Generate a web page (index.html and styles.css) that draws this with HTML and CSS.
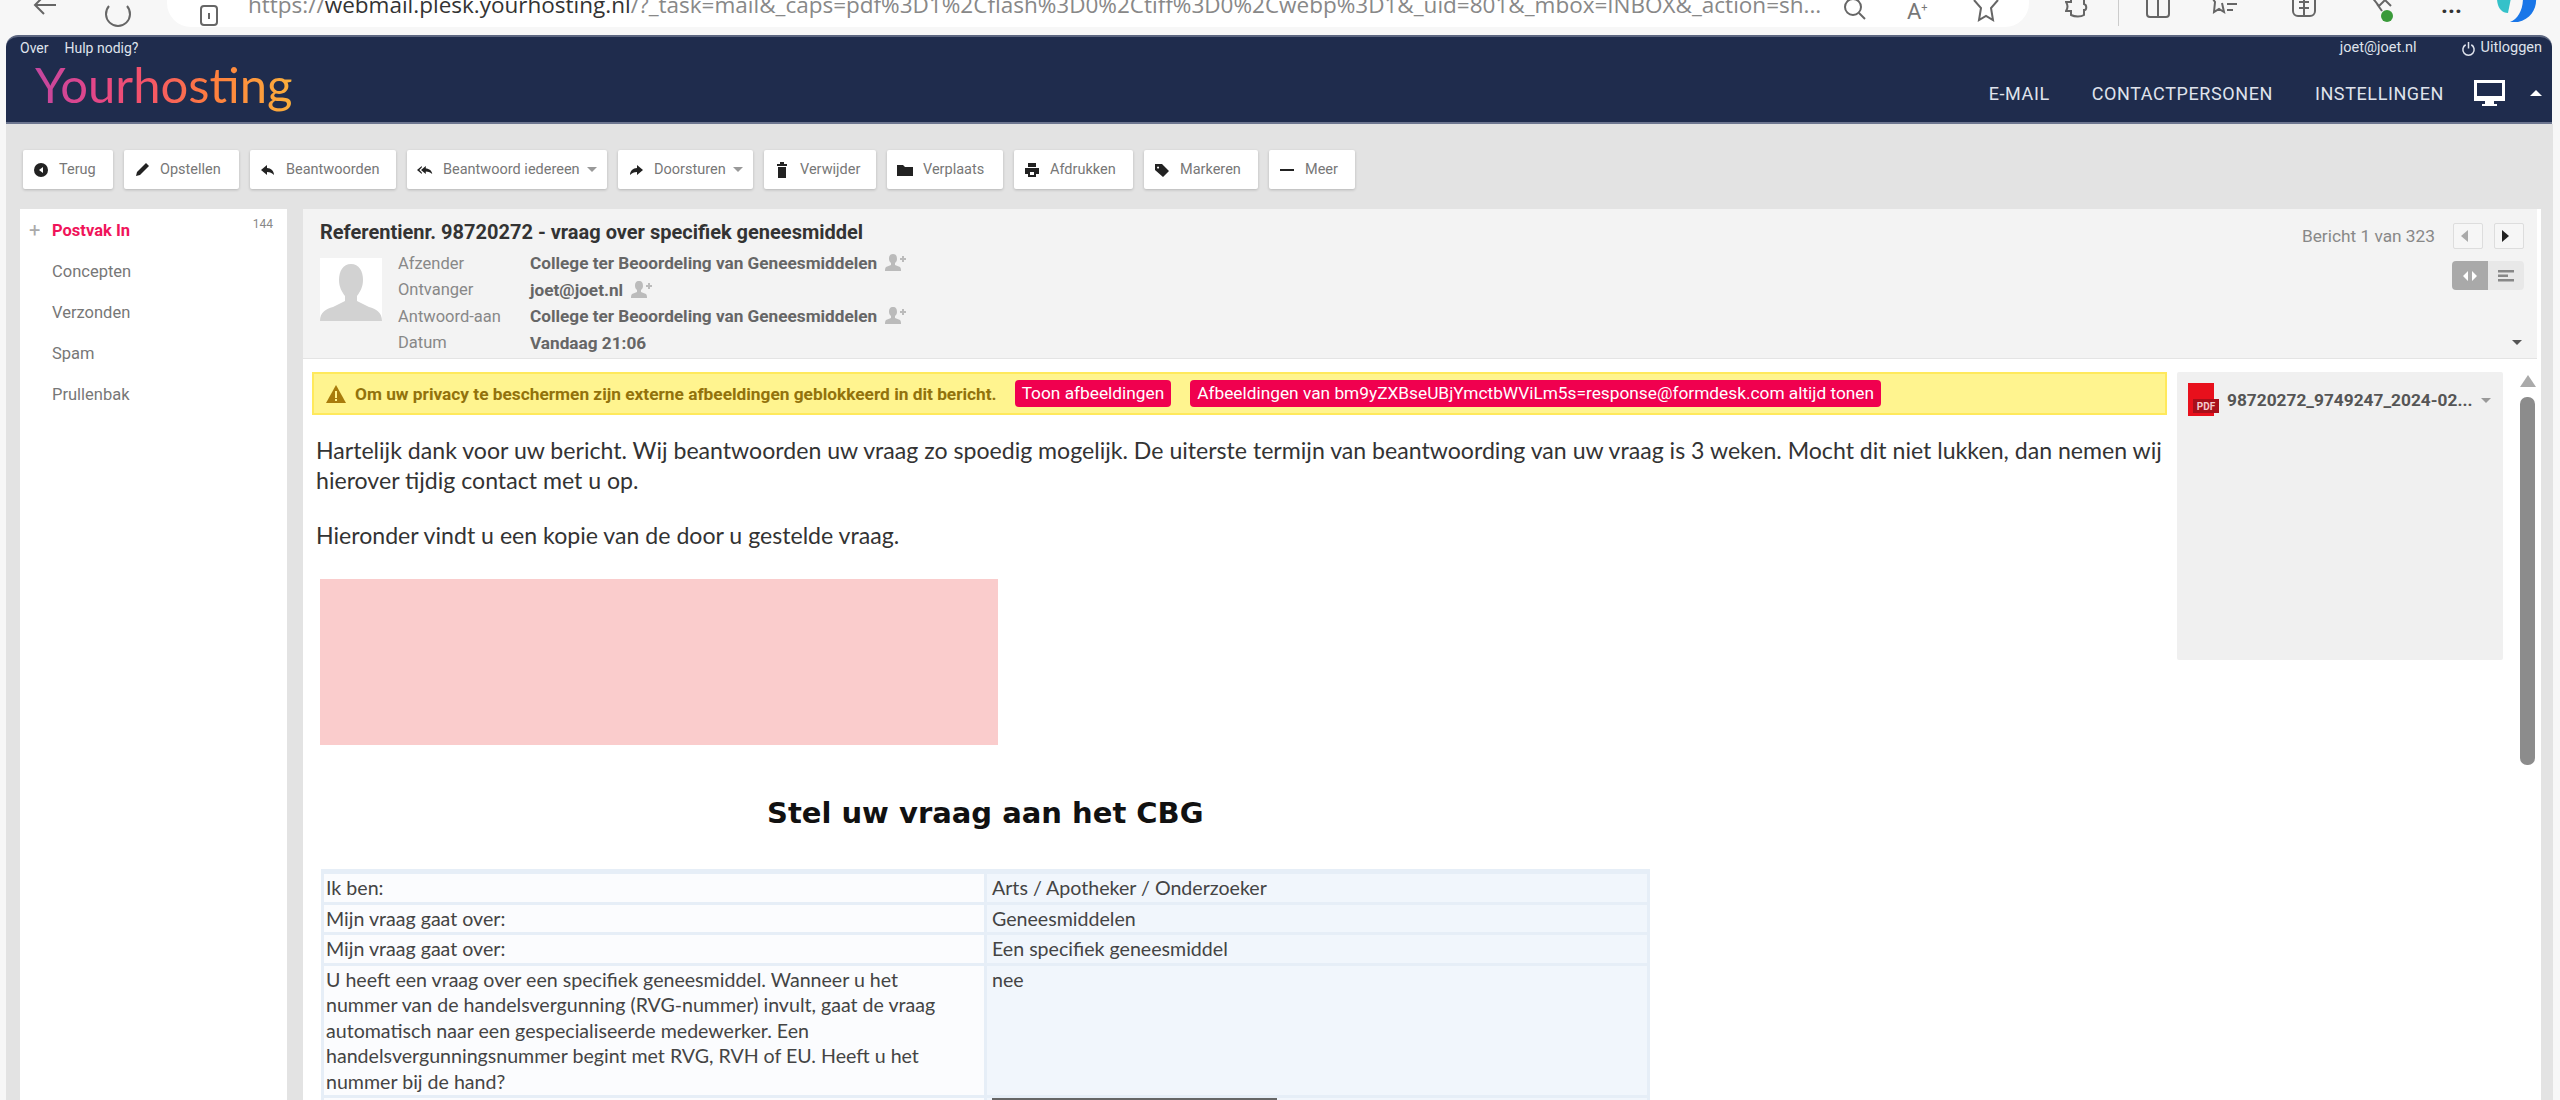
FILE: index.html
```html
<!DOCTYPE html>
<html lang="nl">
<head>
  <meta charset="UTF-8">
  <title>Yourhosting Webmail</title>
  <link rel="stylesheet" href="styles.css">
</head>
<body>
  <!-- browser chrome, top is cut off in the screenshot -->
  <div class="browser">
    <svg class="b-icon back" viewBox="0 0 30 30"><path d="M26 15H6M14 6l-9 9 9 9"/></svg>
    <svg class="b-icon reload" viewBox="0 0 30 30"><path d="M24 9a12 12 0 1 1-18 0"/></svg>
    <div class="addressbar">
      <svg class="b-icon lock" viewBox="0 0 24 24"><rect x="4" y="3" width="16" height="19" rx="3"/><path d="M12 10v6"/></svg>
      <span class="url">https://<b>webmail.plesk.yourhosting.nl</b>/?_task=mail&amp;_caps=pdf%3D1%2Cflash%3D0%2Ctiff%3D0%2Cwebp%3D1&amp;_uid=801&amp;_mbox=INBOX&amp;_action=sh...</span>
      <svg class="b-icon search" viewBox="0 0 24 24"><circle cx="10" cy="8" r="8"/><path d="M16 14l6 6"/></svg>
      <span class="read">A<sup>+</sup></span>
      <svg class="b-icon star" viewBox="0 0 28 24"><path d="M2 0l7 8-2 12 7-4 7 4-2-12 7-8"/></svg>
    </div>
    <div class="browser-tools">
      <svg class="b-icon puzzle" viewBox="0 0 26 26"><path d="M6 0v6H1c2 3 2 6 0 9h5v4c4 2 10 2 13 0v-5c3 0 3-5 0-6V0"/></svg>
      <span class="tool-sep"></span>
      <svg class="b-icon split" viewBox="0 0 26 26"><path d="M2 0v18c0 2 1 3 3 3h16c2 0 3-1 3-3V0M13 0v21"/></svg>
      <svg class="b-icon favs" viewBox="0 0 30 26"><path d="M2 0l4 6-1 10 5-3 5 3-2-9M18 2h10M18 8h10M18 14h6"/></svg>
      <svg class="b-icon coll" viewBox="0 0 26 26"><rect x="2" y="-6" width="22" height="26" rx="5"/><path d="M8 6h10M8 12h10M13 0v20"/></svg>
      <svg class="b-icon ext" viewBox="0 0 26 30"><path d="M2 0l8 10 6-6 6 6M8 8l5 7"/><circle cx="18" cy="20" r="6" fill="#3a9a3a" stroke="none"/></svg>
      <span class="dots">...</span>
      <svg class="copilot" viewBox="0 0 42 24"><path d="M2 0h14l-3 15c-6 0-11-5-11-15z" fill="#35c1c9"/><path d="M28 0h13c1 10-5 21-18 24h-8c8-3 13-12 13-24z" fill="#1976e8"/></svg>
    </div>
  </div>

  <header class="topbar">
    <div class="brand">
      <div class="toplinks">
        <a>Over</a>
        <a>Hulp nodig?</a>
      </div>
      <div class="logo">Yourhosting</div>
    </div>
    <div class="topright">
      <div class="userline">
        <span>joet@joet.nl</span>
        <span class="logout">
          <svg viewBox="0 0 16 16"><path d="M5 4a6 6 0 1 0 6 0M8 1v7"/></svg>
          Uitloggen
        </span>
      </div>
      <nav class="mainnav">
        <a>E-MAIL</a>
        <a>CONTACTPERSONEN</a>
        <a>INSTELLINGEN</a>
        <svg class="monitor" viewBox="0 0 31 26"><path d="M0 0h31v21H20v3h3v2H8v-2h3v-3H0zM3 3v13h25V3z" fill-rule="evenodd"/></svg>
        <span class="caret-up"></span>
      </nav>
    </div>
  </header>

  <div class="page">
    <div class="toolbar">
      <button><svg viewBox="0 0 16 16"><circle cx="8" cy="8" r="7"/><path d="M10 5L6 8l4 3z" fill="#fff"/></svg>Terug</button>
      <button><svg viewBox="0 0 16 16"><path d="M12 1l3 3-9 9-4 1 1-4z"/></svg>Opstellen</button>
      <button><svg viewBox="0 0 16 16"><path d="M7 3L1 8l6 5v-3c3 0 5 1 7 3 0-4-3-7-7-7z"/></svg>Beantwoorden</button>
      <button class="has-menu"><svg viewBox="0 0 20 16"><path d="M6 3L0 8l6 5v-2L3 8l3-3zM11 3L5 8l6 5v-3c3 0 5 1 8 3 0-4-4-7-8-7z"/></svg>Beantwoord iedereen<span class="caret"></span></button>
      <button class="has-menu"><svg viewBox="0 0 16 16"><path d="M9 3l6 5-6 5v-3c-3 0-5 1-7 3 0-4 3-7 7-7z"/></svg>Doorsturen<span class="caret"></span></button>
      <button><svg viewBox="0 0 16 16"><path d="M6 0h4v2h3v2H3V2h3zM4 5h8v11H4z"/></svg>Verwijder</button>
      <button><svg viewBox="0 0 16 16"><path d="M0 3h6l2 2h8v9H0z"/></svg>Verplaats</button>
      <button><svg viewBox="0 0 16 16"><path d="M4 1h8v4H4zM1 6h14v6h-3v3H4v-3H1zM6 10v3h4v-3z" fill-rule="evenodd"/></svg>Afdrukken</button>
      <button><svg viewBox="0 0 16 16"><path d="M1 2h7l7 7-6 6-8-7zM4 4.500a1 1 0 1 0 .1 0z"/></svg>Markeren</button>
      <button><svg viewBox="0 0 16 16"><path d="M1 7h14v2H1z"/></svg>Meer</button>
    </div>

    <div class="content">
      <aside class="folders">
        <span class="unread">144</span>
        <ul>
          <li class="active"><span class="plus">+</span>Postvak In</li>
          <li>Concepten</li>
          <li>Verzonden</li>
          <li>Spam</li>
          <li>Prullenbak</li>
        </ul>
      </aside>

      <main class="mail">
        <section class="mailhead">
          <div class="headleft">
            <h2>Referentienr. 98720272 - vraag over specifiek geneesmiddel</h2>
            <div class="headinfo">
              <svg class="avatar" viewBox="0 0 62 63">
                <rect width="62" height="63" fill="#fff"/>
                <path d="M31 6c8 0 12 7 12 16 0 7-3 12-6 16v5l12 6c7 2 13 5 13 14H0c0-9 6-12 13-14l12-6v-5c-3-4-6-9-6-16 0-9 4-16 12-16z" fill="#d2d2d2"/>
              </svg>
              <dl class="fields">
                <dt>Afzender</dt>
                <dd>College ter Beoordeling van Geneesmiddelen <svg class="addperson" viewBox="0 0 22 18"><path d="M8 0c3 0 4 2 4 5 0 2-1 3-2 4v2l5 2c1 1 1 3 1 4H0c0-1 0-3 1-4l5-2V9C5 8 4 7 4 5c0-3 1-5 4-5zM17 2h2v2h2v2h-2v2h-2V6h-2V4h2z"/></svg></dd>
                <dt>Ontvanger</dt>
                <dd>joet@joet.nl <svg class="addperson" viewBox="0 0 22 18"><path d="M8 0c3 0 4 2 4 5 0 2-1 3-2 4v2l5 2c1 1 1 3 1 4H0c0-1 0-3 1-4l5-2V9C5 8 4 7 4 5c0-3 1-5 4-5zM17 2h2v2h2v2h-2v2h-2V6h-2V4h2z"/></svg></dd>
                <dt>Antwoord-aan</dt>
                <dd>College ter Beoordeling van Geneesmiddelen <svg class="addperson" viewBox="0 0 22 18"><path d="M8 0c3 0 4 2 4 5 0 2-1 3-2 4v2l5 2c1 1 1 3 1 4H0c0-1 0-3 1-4l5-2V9C5 8 4 7 4 5c0-3 1-5 4-5zM17 2h2v2h2v2h-2v2h-2V6h-2V4h2z"/></svg></dd>
                <dt>Datum</dt>
                <dd>Vandaag 21:06</dd>
              </dl>
            </div>
          </div>
          <div class="headright">
            <div class="pager">
              <span>Bericht 1 van 323</span>
              <button class="pagebtn"><span class="tri-left"></span></button>
              <button class="pagebtn"><span class="tri-right"></span></button>
            </div>
            <div class="viewswitch">
              <span class="on"><svg viewBox="0 0 16 12"><path d="M6 1L1 6l5 5zM10 1l5 5-5 5z"/></svg></span>
              <span><svg viewBox="0 0 16 12"><path d="M0 0h16v2.500H0zM0 4.500h10V7H0zM0 9h16v2.500H0z"/></svg></span>
            </div>
            <span class="caret expand"></span>
          </div>
        </section>

        <section class="mailbody">
          <div class="message">
            <div class="notice">
              <svg class="warn" viewBox="0 0 20 18"><path d="M10 0l10 18H0z" fill="#a87b0c"/><path d="M9 6h2v7H9zM9 14h2v2H9z" fill="#fff48f"/></svg>
              <span class="notice-text">Om uw privacy te beschermen zijn externe afbeeldingen geblokkeerd in dit bericht.</span>
              <a class="pill">Toon afbeeldingen</a>
              <a class="pill">Afbeeldingen van bm9yZXBseUBjYmctbWViLm5s=response@formdesk.com altijd tonen</a>
            </div>
            <p>Hartelijk dank voor uw bericht. Wij beantwoorden uw vraag zo spoedig mogelijk. De uiterste termijn van beantwoording van uw vraag is 3 weken. Mocht dit niet lukken, dan nemen wij hierover tijdig contact met u op.</p>
            <p>Hieronder vindt u een kopie van de door u gestelde vraag.</p>
            <div class="blocked"></div>
            <h1>Stel uw vraag aan het CBG</h1>
            <table>
              <tr><td>Ik ben:</td><td>Arts / Apotheker / Onderzoeker</td></tr>
              <tr><td>Mijn vraag gaat over:</td><td>Geneesmiddelen</td></tr>
              <tr><td>Mijn vraag gaat over:</td><td>Een specifiek geneesmiddel</td></tr>
              <tr><td>U heeft een vraag over een specifiek geneesmiddel. Wanneer u het<br>nummer van de handelsvergunning (RVG-nummer) invult, gaat de vraag<br>automatisch naar een gespecialiseerde medewerker. Een<br>handelsvergunningsnummer begint met RVG, RVH of EU. Heeft u het<br>nummer bij de hand?</td><td>nee</td></tr>
              <tr><td>&nbsp;</td><td><div class="hidden-value"></div></td></tr>
            </table>
          </div>

          <div class="attachments">
            <svg class="pdf" viewBox="0 0 31 33">
              <rect width="26" height="33" fill="#e8101c"/>
              <rect x="5" y="16" width="26" height="14" fill="#a80f1a"/>
              <text x="18" y="27" class="pdf-label">PDF</text>
            </svg>
            <span class="filename">98720272_9749247_2024-02...</span>
            <span class="caret"></span>
          </div>

          <div class="scrollbar">
            <span class="tri-up"></span>
            <div class="thumb"></div>
          </div>
        </section>
      </main>
    </div>
  </div>
</body>
</html>
```

FILE: styles.css
```css
html, body {
  margin: 0;
  height: 1100px;
  overflow: hidden;
}
body {
  font-family: Roboto, sans-serif;
  background-color: #f7f7f7;
  color: #555;
}

/* browser chrome */
.browser {
  height: 35px;
  display: flex;
  align-items: flex-start;
  overflow: hidden;
}
.b-icon {
  fill: none;
  stroke: #666;
  stroke-width: 2;
  flex: none;
}
.back {
  width: 30px;
  height: 30px;
  margin: -10px 0 0 30px;
}
.reload {
  width: 30px;
  height: 30px;
  margin: -3px 0 0 43px;
}
.addressbar {
  width: 1862px;
  height: 27px;
  margin-left: 34px;
  background-color: white;
  border-radius: 0 0 24px 24px;
  display: flex;
  align-items: flex-end;
  padding-left: 30px;
  box-sizing: border-box;
}
.lock {
  width: 24px;
  height: 24px;
  margin-right: 27px;
}
.url {
  font-family: "Open Sans", sans-serif;
  font-size: 22.500px;
  line-height: 24px;
  height: 36px;
  margin-bottom: -2px;
  color: #888;
  white-space: nowrap;
  width: 1572px;
  flex: none;
}
.url b {
  font-weight: 400;
  color: #333;
}
.search {
  width: 24px;
  height: 24px;
  margin: 0 0 4px 23px;
}
.read {
  font-size: 22px;
  color: #777;
  margin: 0 0 3px 40px;
  line-height: 24px;
}
.read sup {
  font-size: 11px;
}
.star {
  width: 28px;
  height: 24px;
  margin: 0 0 3px 44px;
}
.browser-tools {
  display: flex;
  align-items: flex-start;
  flex: 1;
}
.browser-tools svg {
  margin-top: -4px;
}
.puzzle {
  width: 26px;
  height: 26px;
  margin-left: 36px;
}
.tool-sep {
  width: 1px;
  height: 26px;
  background-color: #ccc;
  margin-left: 27px;
}
.split {
  width: 26px;
  height: 26px;
  margin-left: 26px;
}
.favs {
  width: 30px;
  height: 26px;
  margin-left: 38px;
}
.coll {
  width: 26px;
  height: 26px;
  margin-left: 52px;
}
.ext {
  width: 26px;
  height: 30px;
  margin-left: 52px;
}
.dots {
  font-size: 24px;
  line-height: 10px;
  margin-left: 46px;
  color: #333;
  font-weight: 700;
}
.browser-tools .copilot {
  width: 42px;
  height: 24px;
  margin: -2px 0 0 33px;
}

/* navy header */
.topbar {
  height: 89px;
  margin: 0 8px 0 6px;
  background-color: #1f2c4d;
  border-radius: 12px 12px 0 0;
  border-top: 2px solid #5d6781;
  border-bottom: 2px solid #6d7690;
  box-sizing: border-box;
  display: flex;
  justify-content: space-between;
  color: #dfe3ec;
}
.toplinks {
  display: flex;
  gap: 16px;
  padding: 4px 0 0 14px;
  font-size: 14px;
  line-height: 14px;
}
.logo {
  font-family: Lato, sans-serif;
  font-size: 49px;
  line-height: 56px;
  margin: 1px 0 0 29px;
  width: max-content;
  background: linear-gradient(90deg, #c2479f 0%, #e2468a 22%, #f4526a 42%, #ff7d3e 68%, #fbb03b 100%);
  -webkit-background-clip: text;
  background-clip: text;
  color: transparent;
}
.topright {
  display: flex;
  flex-direction: column;
  align-items: flex-end;
  padding-right: 10px;
}
.userline {
  display: flex;
  gap: 44px;
  padding-top: 3px;
  font-size: 14.500px;
  line-height: 16px;
}
.logout {
  display: flex;
  align-items: center;
  gap: 5px;
}
.logout svg {
  width: 15px;
  height: 15px;
  fill: none;
  stroke: #dfe3ec;
  stroke-width: 1.6;
}
.mainnav {
  display: flex;
  align-items: center;
  margin-top: 24px;
  font-size: 18px;
  letter-spacing: 0.6px;
}
.mainnav a {
  margin-right: 42px;
}
.mainnav a:nth-child(3) {
  margin-right: 30px;
}
.monitor {
  width: 31px;
  height: 26px;
  fill: white;
}
.caret-up {
  width: 0;
  height: 0;
  margin-left: 25px;
  border-left: 6px solid transparent;
  border-right: 6px solid transparent;
  border-bottom: 6px solid white;
}

/* page */
.page {
  height: 976px;
  margin: 0 7px 0 6px;
  background-color: #e3e3e3;
  padding: 26px 0 0 0;
  box-sizing: border-box;
}
.toolbar {
  display: grid;
  grid-template-columns: 90px 115px 146px 200px 135px 112px 116px 119px 114px 86px;
  column-gap: 11px;
  margin-left: 17px;
}
.toolbar button {
  height: 39px;
  background-color: white;
  border: none;
  border-radius: 2px;
  box-shadow: 0 1px 3px rgba(0, 0, 0, 0.2);
  display: flex;
  align-items: center;
  padding: 0 0 0 10px;
  font-family: Roboto, sans-serif;
  font-size: 14.500px;
  color: #777;
  white-space: nowrap;
}
.toolbar svg {
  width: 16px;
  height: 16px;
  margin-right: 10px;
  fill: #222;
  flex: none;
}
.caret {
  display: inline-block;
  width: 0;
  height: 0;
  margin-left: 7px;
  border-left: 5px solid transparent;
  border-right: 5px solid transparent;
  border-top: 5px solid #999;
}

.content {
  display: flex;
  margin-top: 20px;
  padding-left: 14px;
  height: 900px;
}

/* folder list */
.folders {
  width: 267px;
  background-color: white;
  position: relative;
  font-size: 16.500px;
  color: #777;
}
.folders ul {
  list-style: none;
  margin: 0;
  padding: 0;
}
.folders li {
  height: 41px;
  line-height: 41px;
  padding-left: 32px;
  position: relative;
  top: 1px;
}
.folders li.active {
  color: #f0145a;
  font-weight: 700;
}
.plus {
  position: absolute;
  left: 9px;
  font-size: 20px;
  font-weight: 400;
  color: #aaa;
}
.unread {
  position: absolute;
  right: 14px;
  top: 8px;
  font-size: 12px;
  color: #888;
}

/* mail panel */
.mail {
  width: 2238px;
  margin-left: 16px;
  background-color: white;
  display: flex;
  flex-direction: column;
}
.mailhead {
  height: 150px;
  background-color: #f3f3f3;
  border-bottom: 1px solid #e4e4e4;
  box-sizing: border-box;
  margin-right: 4px;
  display: flex;
  justify-content: space-between;
  padding: 0 13px 0 17px;
}
.mailhead h2 {
  margin: 13px 0 0 0;
  font-size: 20px;
  line-height: 20px;
  font-weight: 700;
  color: #333;
}
.headinfo {
  display: flex;
  margin-top: 15px;
}
.avatar {
  width: 62px;
  height: 63px;
  margin-top: 1px;
}
.fields {
  margin: -7px 0 0 16px;
  display: grid;
  grid-template-columns: 132px auto;
  grid-auto-rows: 26.500px;
  align-items: center;
  font-size: 16.500px;
}
.fields dt {
  color: #888;
}
.fields dd {
  margin: 0;
  font-size: 17.200px;
  font-weight: 700;
  color: #666;
  display: flex;
  align-items: center;
  gap: 8px;
}
.addperson {
  width: 22px;
  height: 18px;
  fill: #bbb;
}
.headright {
  display: flex;
  flex-direction: column;
  align-items: flex-end;
  padding-top: 14px;
}
.pager {
  display: flex;
  align-items: center;
  font-size: 17.300px;
  color: #888;
}
.pagebtn {
  width: 30px;
  height: 26px;
  margin-left: 11px;
  padding: 0;
  background-color: #f6f6f6;
  border: 1px solid #ddd;
  border-radius: 2px;
  display: flex;
  align-items: center;
  justify-content: center;
}
.pager span:first-child {
  margin-right: 7px;
}
.tri-left {
  border-top: 6px solid transparent;
  border-bottom: 6px solid transparent;
  border-right: 7px solid #aaa;
}
.tri-right {
  border-top: 6px solid transparent;
  border-bottom: 6px solid transparent;
  border-left: 7px solid #222;
}
.viewswitch {
  display: flex;
  margin-top: 12px;
  border-radius: 4px;
  overflow: hidden;
}
.viewswitch span {
  width: 36px;
  height: 29px;
  background-color: #e8e8e8;
  display: flex;
  align-items: center;
  justify-content: center;
}
.viewswitch .on {
  background-color: #a9a9a9;
}
.viewswitch svg {
  width: 16px;
  height: 12px;
  fill: #888;
}
.viewswitch .on svg {
  fill: white;
}
.expand {
  margin: 50px 2px 0 0;
  border-top-color: #555;
}

.mailbody {
  flex: 1;
  display: flex;
  min-height: 0;
  padding: 13px 6px 0 9px;
}
.message {
  width: 1855px;
  flex: none;
}
.notice {
  height: 43px;
  background-color: #fff48f;
  border: 2px solid #ffe95c;
  box-sizing: border-box;
  display: flex;
  align-items: center;
  padding-left: 12px;
}
.warn {
  width: 20px;
  height: 18px;
  margin-right: 9px;
}
.notice-text {
  font-size: 17.300px;
  font-weight: 700;
  color: #92720c;
  margin-right: 18px;
  white-space: nowrap;
}
.pill {
  background-color: #f0004f;
  color: white;
  font-size: 17.300px;
  line-height: 27px;
  padding: 0 7px;
  border-radius: 4px;
  margin-right: 19px;
  white-space: nowrap;
}
.message p {
  margin: 20px 0 0 4px;
  font-family: Lato, sans-serif;
  font-size: 23.120px;
  line-height: 30px;
  color: #333;
}
.message p + p {
  margin-top: 25px;
}
.blocked {
  width: 678px;
  height: 166px;
  margin: 29px 0 0 8px;
  background-color: #facccc;
}
h1 {
  margin: 49px 0 0 0;
  padding-left: 455px;
  font-family: "DejaVu Sans", sans-serif;
  font-size: 29px;
  line-height: 38px;
  font-weight: 700;
  color: #111;
}
table {
  width: 1329px;
  margin: 37px 0 0 9px;
  border-collapse: collapse;
  table-layout: fixed;
  font-family: Lato, sans-serif;
  font-size: 19.600px;
  line-height: 25.500px;
  color: #444;
}
td {
  border: 3px solid #e6eef7;
  padding: 1px 2px;
  vertical-align: top;
  background-color: #fbfcfe;
  white-space: nowrap;
}
td + td {
  background-color: #f1f6fc;
  padding-left: 5px;
}
tr:first-child td {
  border-top-width: 5px;
}
.hidden-value {
  width: 285px;
  height: 20px;
  margin-top: -1px;
  background-color: #666;
}

/* attachment list */
.attachments {
  width: 326px;
  height: 288px;
  margin-left: 10px;
  flex: none;
  background-color: #f0f0f0;
  border-radius: 2px;
  box-sizing: border-box;
  padding: 11px 0 0 11px;
  display: flex;
  align-items: flex-start;
}
.pdf {
  width: 31px;
  height: 33px;
  flex: none;
}
.pdf-label {
  font-family: Roboto, sans-serif;
  font-size: 10px;
  font-weight: 700;
  fill: #f4c9cc;
  text-anchor: middle;
}
.filename {
  font-size: 17.300px;
  font-weight: 700;
  color: #555;
  line-height: 34px;
  margin-left: 8px;
  white-space: nowrap;
}
.attachments .caret {
  margin: 15px 0 0 9px;
}
.scrollbar {
  width: 15px;
  margin-left: 17px;
  display: flex;
  flex-direction: column;
  align-items: center;
}
.tri-up {
  margin-top: 3px;
  border-left: 8px solid transparent;
  border-right: 8px solid transparent;
  border-bottom: 12px solid #aaa;
}
.thumb {
  width: 15px;
  height: 368px;
  margin-top: 10px;
  background-color: #8c8c8c;
  border-radius: 7px;
}
```
